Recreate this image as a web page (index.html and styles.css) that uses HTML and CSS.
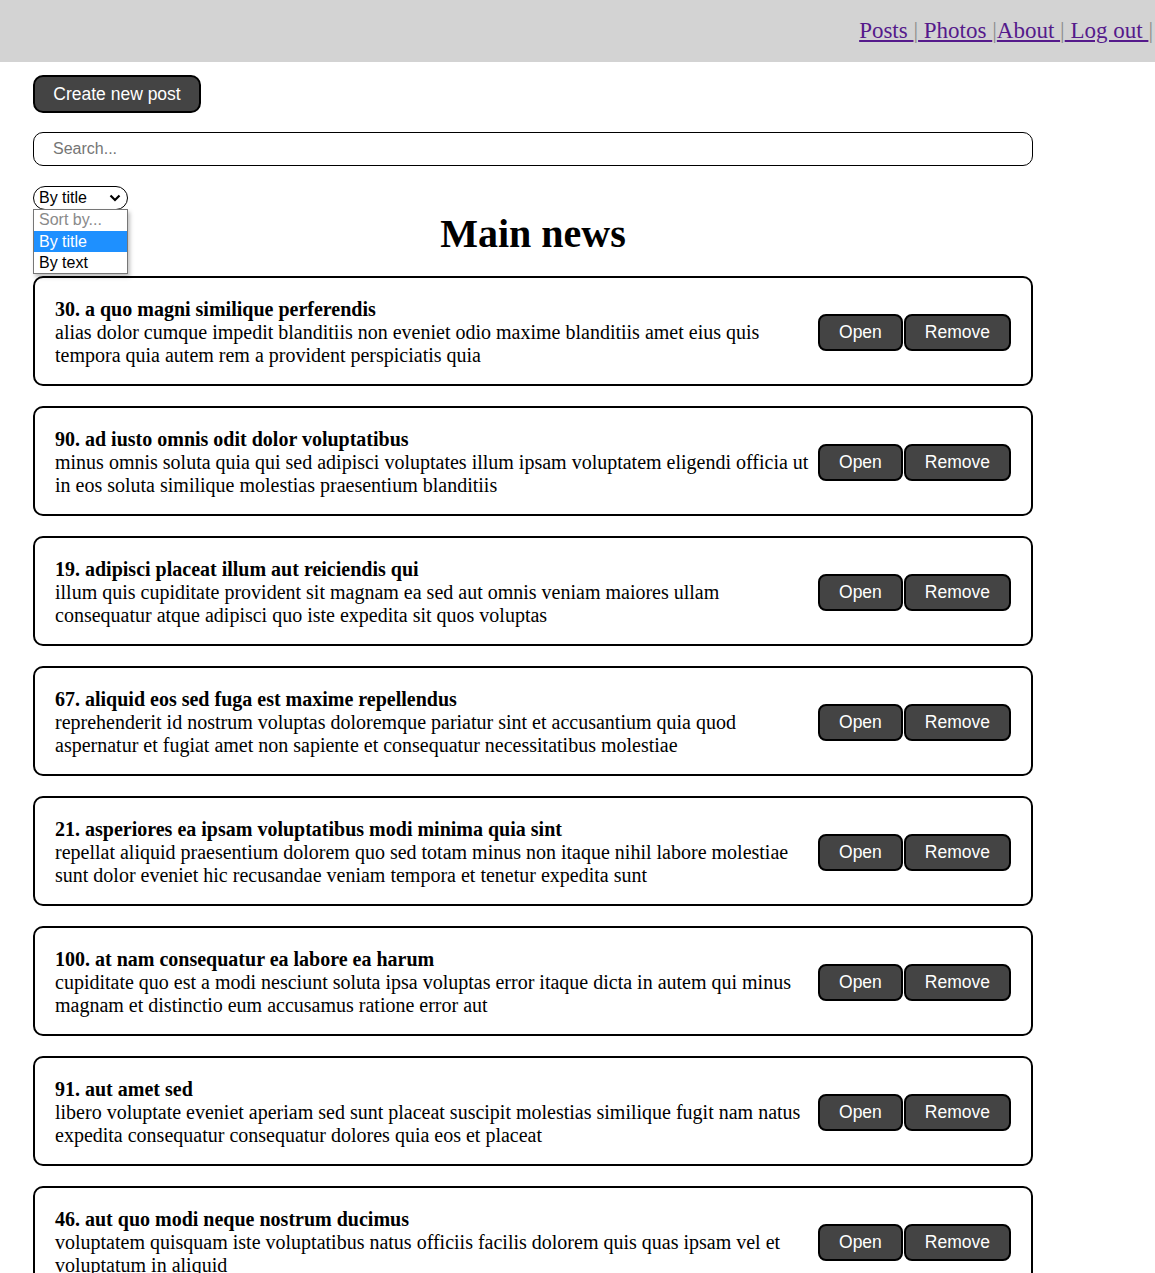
FILE: index.html
```html
<!DOCTYPE html>
<html lang="en">
<head>
<meta charset="utf-8">
<title>Posts</title>
<link rel="stylesheet" href="styles.css">
</head>
<body>
<nav class="navbar">
  <div class="navbar-links">
    <a href="#" class="nav-link">Posts </a><span class="sep">|</span><a href="#" class="nav-link"> Photos </a><span class="sep">|</span><a href="#" class="nav-link">About </a><span class="sep">|</span><a href="#" class="nav-link"> Log out </a><span class="sep">|</span>
  </div>
</nav>
<main class="app">
  <button class="btn btn-create">Create new post</button>
  <input class="search" type="text" placeholder="Search...">
  <div class="sort">
    <div class="select">By title <svg class="chev" width="12" height="8" viewBox="0 0 12 8"><path d="M1.5 1.5 L6 6 L10.5 1.5" fill="none" stroke="#000" stroke-width="2.2"/></svg></div>
    <div class="dropdown">
      <div class="option option-muted">Sort by...</div>
      <div class="option option-active">By title</div>
      <div class="option">By text</div>
    </div>
  </div>
  <h1 class="title">Main news</h1>
  <div class="post-list">
    <div class="post">
      <div class="post-content"><strong>30. a quo magni similique perferendis</strong><div>alias dolor cumque impedit blanditiis non eveniet odio maxime blanditiis amet eius quis tempora quia autem rem a provident perspiciatis quia</div></div>
      <div class="post-btns"><button class="btn">Open</button><button class="btn">Remove</button></div>
    </div>
    <div class="post">
      <div class="post-content"><strong>90. ad iusto omnis odit dolor voluptatibus</strong><div>minus omnis soluta quia qui sed adipisci voluptates illum ipsam voluptatem eligendi officia ut in eos soluta similique molestias praesentium blanditiis</div></div>
      <div class="post-btns"><button class="btn">Open</button><button class="btn">Remove</button></div>
    </div>
    <div class="post">
      <div class="post-content"><strong>19. adipisci placeat illum aut reiciendis qui</strong><div>illum quis cupiditate provident sit magnam ea sed aut omnis veniam maiores ullam consequatur atque adipisci quo iste expedita sit quos voluptas</div></div>
      <div class="post-btns"><button class="btn">Open</button><button class="btn">Remove</button></div>
    </div>
    <div class="post">
      <div class="post-content"><strong>67. aliquid eos sed fuga est maxime repellendus</strong><div>reprehenderit id nostrum voluptas doloremque pariatur sint et accusantium quia quod aspernatur et fugiat amet non sapiente et consequatur necessitatibus molestiae</div></div>
      <div class="post-btns"><button class="btn">Open</button><button class="btn">Remove</button></div>
    </div>
    <div class="post">
      <div class="post-content"><strong>21. asperiores ea ipsam voluptatibus modi minima quia sint</strong><div>repellat aliquid praesentium dolorem quo sed totam minus non itaque nihil labore molestiae sunt dolor eveniet hic recusandae veniam tempora et tenetur expedita sunt</div></div>
      <div class="post-btns"><button class="btn">Open</button><button class="btn">Remove</button></div>
    </div>
    <div class="post">
      <div class="post-content"><strong>100. at nam consequatur ea labore ea harum</strong><div>cupiditate quo est a modi nesciunt soluta ipsa voluptas error itaque dicta in autem qui minus magnam et distinctio eum accusamus ratione error aut</div></div>
      <div class="post-btns"><button class="btn">Open</button><button class="btn">Remove</button></div>
    </div>
    <div class="post">
      <div class="post-content"><strong>91. aut amet sed</strong><div>libero voluptate eveniet aperiam sed sunt placeat suscipit molestias similique fugit nam natus expedita consequatur consequatur dolores quia eos et placeat</div></div>
      <div class="post-btns"><button class="btn">Open</button><button class="btn">Remove</button></div>
    </div>
    <div class="post">
      <div class="post-content"><strong>46. aut quo modi neque nostrum ducimus</strong><div>voluptatem quisquam iste voluptatibus natus officiis facilis dolorem quis quas ipsam vel et voluptatum in aliquid</div></div>
      <div class="post-btns"><button class="btn">Open</button><button class="btn">Remove</button></div>
    </div>
  </div>
</main>
</body>
</html>
```
FILE: styles.css
```css
* { box-sizing: border-box; }
body {
  margin: 0;
  font-family: "Liberation Serif", "Times New Roman", serif;
  color: #000;
  background: #fff;
}
.navbar {
  height: 62px;
  background: #d3d3d3;
  display: flex;
  justify-content: flex-end;
  align-items: center;
  padding: 0 2px 0 0;
}
.navbar-links {
  font-size: 23px;
  font-family: "Liberation Serif", serif;
}
.nav-link { color: #551a8b; text-decoration: underline; white-space: pre; }
.sep { color: #8c8c8c; }
.app {
  width: 1033px;
  padding: 13px 0 0 33px;
}
.btn {
  font-family: "Liberation Sans", Arial, sans-serif;
  font-size: 17.5px;
  color: #fff;
  background: #444;
  border: 2px solid #000;
  border-radius: 8px;
  cursor: pointer;
}
.btn-create {
  display: block;
  height: 38px;
  width: 168px;
  border-radius: 10px;
  padding: 0;
}
.search {
  display: block;
  width: 100%;
  height: 34px;
  margin-top: 19px;
  border: 1px solid #000;
  border-radius: 10px;
  padding: 0 19px;
  font-family: "Liberation Sans", Arial, sans-serif;
  font-size: 16px;
}
.search::placeholder { color: #757575; }
.sort {
  position: relative;
  margin-top: 20px;
  width: 95px;
}
.select {
  height: 24px;
  border: 1px solid #000;
  border-radius: 12px;
  font-family: "Liberation Sans", Arial, sans-serif;
  font-size: 16px;
  line-height: 22px;
  padding: 0 6px 0 5px;
  display: flex;
  align-items: center;
  justify-content: space-between;
}
.chev { display: block; }
.dropdown {
  position: absolute;
  left: 0;
  top: 23px;
  width: 95px;
  background: #fff;
  border: 1px solid #767676;
  box-shadow: 2px 3px 4px rgba(0,0,0,0.25);
  font-family: "Liberation Sans", Arial, sans-serif;
  font-size: 16px;
  z-index: 2;
}
.option { height: 21px; line-height: 21px; padding-left: 5px; }
.option:first-child { line-height: 19px; }
.option-muted { color: #8a8a8a; }
.option-active { background: #1e90ff; color: #fff; }
.title {
  margin: 1px 0 19px;
  text-align: center;
  font-size: 40px;
  line-height: 46px;
}
.post {
  display: flex;
  justify-content: space-between;
  align-items: center;
  border: 2px solid #000;
  border-radius: 10px;
  padding: 20px 20px 17px;
  margin-bottom: 20px;
  font-size: 20px;
  line-height: 23px;
}
.post-content { flex: 1; padding-right: 6px; }
.post-btns { display: flex; gap: 1px; flex-shrink: 0; }
.post-btns .btn { height: 37px; padding: 0 19px; }
```
